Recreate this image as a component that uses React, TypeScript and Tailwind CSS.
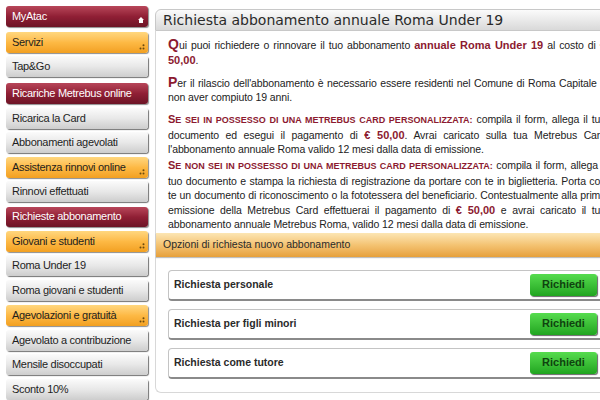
import React from 'react';

type Kind = 'red' | 'orange' | 'grey';

const menu: { label: string; kind: Kind; mt: string }[] = [
  { label: 'MyAtac', kind: 'red', mt: 'mt-[6px]' },
  { label: 'Servizi', kind: 'orange', mt: 'mt-[5px]' },
  { label: 'Tap&Go', kind: 'grey', mt: 'mt-[3px]' },
  { label: 'Ricariche Metrebus online', kind: 'red', mt: 'mt-[6px]' },
  { label: 'Ricarica la Card', kind: 'grey', mt: 'mt-[4px]' },
  { label: 'Abbonamenti agevolati', kind: 'grey', mt: 'mt-[3px]' },
  { label: 'Assistenza rinnovi online', kind: 'orange', mt: 'mt-[4px]' },
  { label: 'Rinnovi effettuati', kind: 'grey', mt: 'mt-[3px]' },
  { label: 'Richieste abbonamento', kind: 'red', mt: 'mt-[5px]' },
  { label: 'Giovani e studenti', kind: 'orange', mt: 'mt-[4px]' },
  { label: 'Roma Under 19', kind: 'grey', mt: 'mt-[3px]' },
  { label: 'Roma giovani e studenti', kind: 'grey', mt: 'mt-[4px]' },
  { label: 'Agevolazioni e gratuità', kind: 'orange', mt: 'mt-[4px]' },
  { label: 'Agevolato a contribuzione', kind: 'grey', mt: 'mt-[4px]' },
  { label: 'Mensile disoccupati', kind: 'grey', mt: 'mt-[3px]' },
  { label: 'Sconto 10%', kind: 'grey', mt: 'mt-[4px]' },
];

const kindClass: Record<Kind, string> = {
  red: 'bg-linear-to-b from-[#b8465a] via-[#901f35] to-[#6d1426] text-white shadow-[1px_1px_1px_rgba(0,0,0,0.45)]',
  orange: 'bg-linear-to-b from-[#ffd77e] via-[#fdb944] to-[#f2a020] text-[#1e1e1e] shadow-[1px_1px_1px_rgba(0,0,0,0.45)]',
  grey: 'bg-linear-to-b from-[#fbfbfb] via-[#e8e8e8] to-[#cdcdcd] text-[#1e1e1e] shadow-[1px_1px_1px_rgba(0,0,0,0.55)]',
};

function HomeIcon() {
  return (
    <svg width="6" height="6" viewBox="0 0 6 6" className="absolute right-[4px] bottom-[4px]">
      <path d="M3 0 L6 3 L5 3 L5 6 L1 6 L1 3 L0 3 Z" fill="#fff" />
    </svg>
  );
}

function Dots() {
  return (
    <svg width="6" height="6" viewBox="0 0 6 6" className="absolute right-[3px] bottom-[3px]">
      <circle cx="4.5" cy="1.2" r="1" fill="#6b4a10" />
      <circle cx="1.5" cy="4.5" r="1" fill="#6b4a10" />
      <circle cx="4.5" cy="4.5" r="1" fill="#6b4a10" />
    </svg>
  );
}

function MenuButton({ label, kind, mt, first }: { label: string; kind: Kind; mt: string; first: boolean }) {
  return (
    <div className={`relative h-[21px] w-[142px] rounded-[3px] px-[6px] flex items-center whitespace-nowrap text-[11px] tracking-[-0.3px] leading-none ${mt} ${kindClass[kind]}`}>
      {label}
      {first && <HomeIcon />}
      {kind === 'orange' && <Dots />}
    </div>
  );
}

function Option({ label }: { label: string }) {
  return (
    <div className="h-[31px] rounded-[4px] border border-[#c4c4c4] border-b-2 border-b-[#8a8a8a] flex items-center justify-between pl-[5px] pr-[5px]">
      <span className="font-bold text-[10.5px] text-[#2a2a2a]">{label}</span>
      <button className="h-[22px] w-[67px] rounded-[3px] bg-linear-to-b from-[#56dc4e] to-[#1fa51f] text-[#0f430f] font-bold text-[11px] shadow-[1px_1px_1px_rgba(0,0,0,0.6)]">
        Richiedi
      </button>
    </div>
  );
}

const red = 'text-[#8c1a30] font-bold tracking-normal';

function Caps({ rest }: { rest: string }) {
  return (
    <span className={red}>
      <span className="text-[11px]">S</span>
      <span className="text-[9px]">{rest}</span>
    </span>
  );
}

export default function App() {
  return (
    <div className="w-[600px] h-[400px] overflow-hidden bg-white flex" style={{ fontFamily: '"Liberation Sans", Arial, sans-serif' }}>
      <div className="w-[155px] shrink-0 pl-[6px] flex flex-col">
        {menu.map((m, i) => (
          <MenuButton key={m.label} {...m} first={i === 0} />
        ))}
      </div>

      <div className="w-[462px] shrink-0 pt-[9px]">
        <div
          className="h-[22px] rounded-tl-[6px] border border-[#c8c8c8] bg-linear-to-b from-[#fbfbfb] to-[#d9d9d9] flex items-center pl-[7px] text-[14px] text-[#2a2a2a]"
          style={{ fontFamily: '"DejaVu Sans", sans-serif' }}
        >
          Richiesta abbonamento annuale Roma Under 19
        </div>
        <div className="h-[362px] border-l border-b border-[#d8d8d8] rounded-bl-[6px]">
          <div className="pl-[12px] pr-[11px] pt-[7px] text-[10.5px] tracking-[-0.1px] leading-[14.5px] text-[#222] text-justify">
            <p>
              <span className={`${red} text-[14px] leading-[0]`}>Q</span>ui puoi richiedere o rinnovare il tuo abbonamento{' '}
              <span className={`${red} text-[11px]`}>annuale Roma Under 19</span> al costo di{' '}
              <span className={`${red} text-[11px]`}>€ 50,00</span>.
            </p>
            <p className="mt-[8.5px]">
              <span className={`${red} text-[14px] leading-[0]`}>P</span>er il rilascio dell'abbonamento è necessario essere residenti nel Comune di Roma Capitale e non aver compiuto 19 anni.
            </p>
            <p className="mt-[7.5px]">
              <Caps rest="E SEI IN POSSESSO DI UNA METREBUS CARD PERSONALIZZATA:" /> compila il form, allega il tuo documento ed esegui il pagamento di{' '}
              <span className={`${red} text-[11px]`}>€ 50,00</span>. Avrai caricato sulla tua Metrebus Card l'abbonamento annuale Roma valido 12 mesi dalla data di emissione.
            </p>
            <p className="mt-[1.5px]">
              <Caps rest="E NON SEI IN POSSESSO DI UNA METREBUS CARD PERSONALIZZATA:" /> compila il form, allega il tuo documento e stampa la richiesta di registrazione da portare con te in biglietteria. Porta con te un documento di riconoscimento o la fototessera del beneficiario. Contestualmente alla prima emissione della Metrebus Card effettuerai il pagamento di{' '}
              <span className={`${red} text-[11px]`}>€ 50,00</span> e avrai caricato il tuo abbonamento annuale Metrebus Roma, valido 12 mesi dalla data di emissione.
            </p>
          </div>

          <div className="mt-[1px] h-[24px] bg-linear-to-b from-[#fce6b4] via-[#f4c372] to-[#e6a03a] flex items-center pl-[7px] text-[10.5px] text-[#2a2a2a] shadow-[0_1px_1px_rgba(0,0,0,0.25)]">
            Opzioni di richiesta nuovo abbonamento
          </div>

          <div className="pl-[12px] pr-[14px] pt-[13px] flex flex-col gap-[8px]">
            <Option label="Richiesta personale" />
            <Option label="Richiesta per figli minori" />
            <Option label="Richiesta come tutore" />
          </div>
        </div>
      </div>
    </div>
  );
}
